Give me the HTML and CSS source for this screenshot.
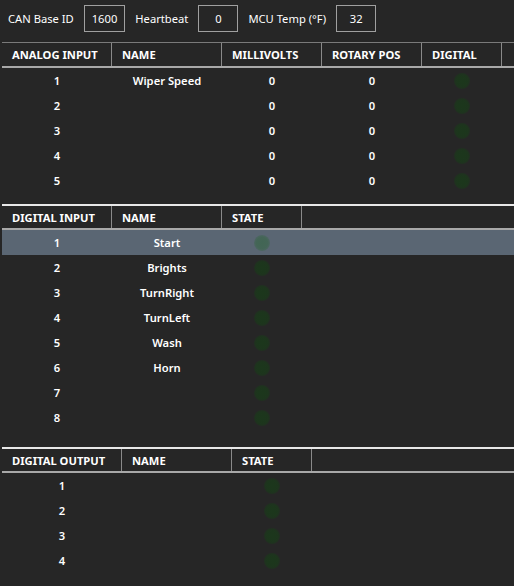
FILE: index.html
```html
<!DOCTYPE html>
<html>
<head>
<meta charset="utf-8">
<link rel="stylesheet" href="styles.css">
</head>
<body>
<div class="topbar">
  <span class="lbl">CAN Base ID</span><span class="box">1600</span>
  <span class="lbl">Heartbeat</span><span class="box">0</span>
  <span class="lbl">MCU Temp (°F)</span><span class="box">32</span>
</div>

<section class="grid analog">
  <div class="head">
    <div class="hc c110">ANALOG INPUT</div>
    <div class="hc c110">NAME</div>
    <div class="hc c100">MILLIVOLTS</div>
    <div class="hc c100">ROTARY POS</div>
    <div class="hc c80">DIGITAL</div>
  </div>
  <div class="row"><div class="c c110">1</div><div class="c c110">Wiper Speed</div><div class="c c100">0</div><div class="c c100">0</div><div class="c c80"><span class="led"></span></div></div>
  <div class="row"><div class="c c110">2</div><div class="c c110"></div><div class="c c100">0</div><div class="c c100">0</div><div class="c c80"><span class="led"></span></div></div>
  <div class="row"><div class="c c110">3</div><div class="c c110"></div><div class="c c100">0</div><div class="c c100">0</div><div class="c c80"><span class="led"></span></div></div>
  <div class="row"><div class="c c110">4</div><div class="c c110"></div><div class="c c100">0</div><div class="c c100">0</div><div class="c c80"><span class="led"></span></div></div>
  <div class="row"><div class="c c110">5</div><div class="c c110"></div><div class="c c100">0</div><div class="c c100">0</div><div class="c c80"><span class="led"></span></div></div>
</section>

<section class="grid dinput">
  <div class="head sep">
    <div class="hc c110">DIGITAL INPUT</div>
    <div class="hc c110">NAME</div>
    <div class="hc c80">STATE</div>
  </div>
  <div class="row selected"><div class="c c110">1</div><div class="c c110">Start</div><div class="c c80"><span class="led"></span></div></div>
  <div class="row"><div class="c c110">2</div><div class="c c110">Brights</div><div class="c c80"><span class="led"></span></div></div>
  <div class="row"><div class="c c110">3</div><div class="c c110">TurnRight</div><div class="c c80"><span class="led"></span></div></div>
  <div class="row"><div class="c c110">4</div><div class="c c110">TurnLeft</div><div class="c c80"><span class="led"></span></div></div>
  <div class="row"><div class="c c110">5</div><div class="c c110">Wash</div><div class="c c80"><span class="led"></span></div></div>
  <div class="row"><div class="c c110">6</div><div class="c c110">Horn</div><div class="c c80"><span class="led"></span></div></div>
  <div class="row"><div class="c c110">7</div><div class="c c110"></div><div class="c c80"><span class="led"></span></div></div>
  <div class="row"><div class="c c110">8</div><div class="c c110"></div><div class="c c80"><span class="led"></span></div></div>
</section>

<section class="grid doutput">
  <div class="head sep">
    <div class="hc c120">DIGITAL OUTPUT</div>
    <div class="hc c110">NAME</div>
    <div class="hc c80">STATE</div>
  </div>
  <div class="row"><div class="c c120">1</div><div class="c c110"></div><div class="c c80"><span class="led"></span></div></div>
  <div class="row"><div class="c c120">2</div><div class="c c110"></div><div class="c c80"><span class="led"></span></div></div>
  <div class="row"><div class="c c120">3</div><div class="c c110"></div><div class="c c80"><span class="led"></span></div></div>
  <div class="row"><div class="c c120">4</div><div class="c c110"></div><div class="c c80"><span class="led"></span></div></div>
</section>
</body>
</html>
```

FILE: styles.css
```css
html, body {
  margin: 0;
  padding: 0;
  background: #262626;
  color: #ffffff;
  font-family: "Noto Sans", "Open Sans", sans-serif;
  font-size: 11.2px;
  overflow: hidden;
}

.topbar {
  display: flex;
  align-items: center;
  height: 27px;
  margin-top: 5px;
  padding-left: 8px;
}

.lbl {
  margin-right: 10px;
}

.box {
  box-sizing: border-box;
  height: 27px;
  min-width: 40px;
  padding: 0 7px;
  border: 1px solid #a0a0a0;
  display: flex;
  align-items: center;
  justify-content: center;
  margin-right: 10px;
}

.grid {
  margin-left: 2px;
}

.analog {
  margin-top: 10px;
}

.dinput {
  margin-top: 11px;
}

.doutput {
  margin-top: 17px;
}

.head {
  display: flex;
  box-sizing: border-box;
  height: 26px;
  border-top: 1px solid #7a7a7a;
  border-bottom: 2px solid #a8a8a8;
}

.head.sep {
  border-top: 2px solid #e8e8e8;
}

.hc {
  box-sizing: border-box;
  border-right: 1px solid #8a8a8a;
  padding-left: 10px;
  font-weight: 700;
  display: flex;
  align-items: center;
  white-space: nowrap;
}

.row {
  display: flex;
  height: 25px;
  align-items: center;
}

.row.selected {
  background: #5a6673;
}

.c {
  box-sizing: border-box;
  text-align: center;
  font-weight: 600;
  display: flex;
  align-items: center;
  justify-content: center;
  height: 25px;
}

.c110 { width: 110px; flex: none; }
.c100 { width: 100px; flex: none; }
.c80 { width: 80px; flex: none; }
.c120 { width: 120px; flex: none; }

.led {
  display: block;
  width: 16px;
  height: 16px;
  border-radius: 50%;
  background: radial-gradient(circle, rgba(0, 100, 0, 0.27) 0%, rgba(0, 100, 0, 0.25) 50%, rgba(0, 100, 0, 0.1) 80%, rgba(0, 100, 0, 0) 100%);
}
```
